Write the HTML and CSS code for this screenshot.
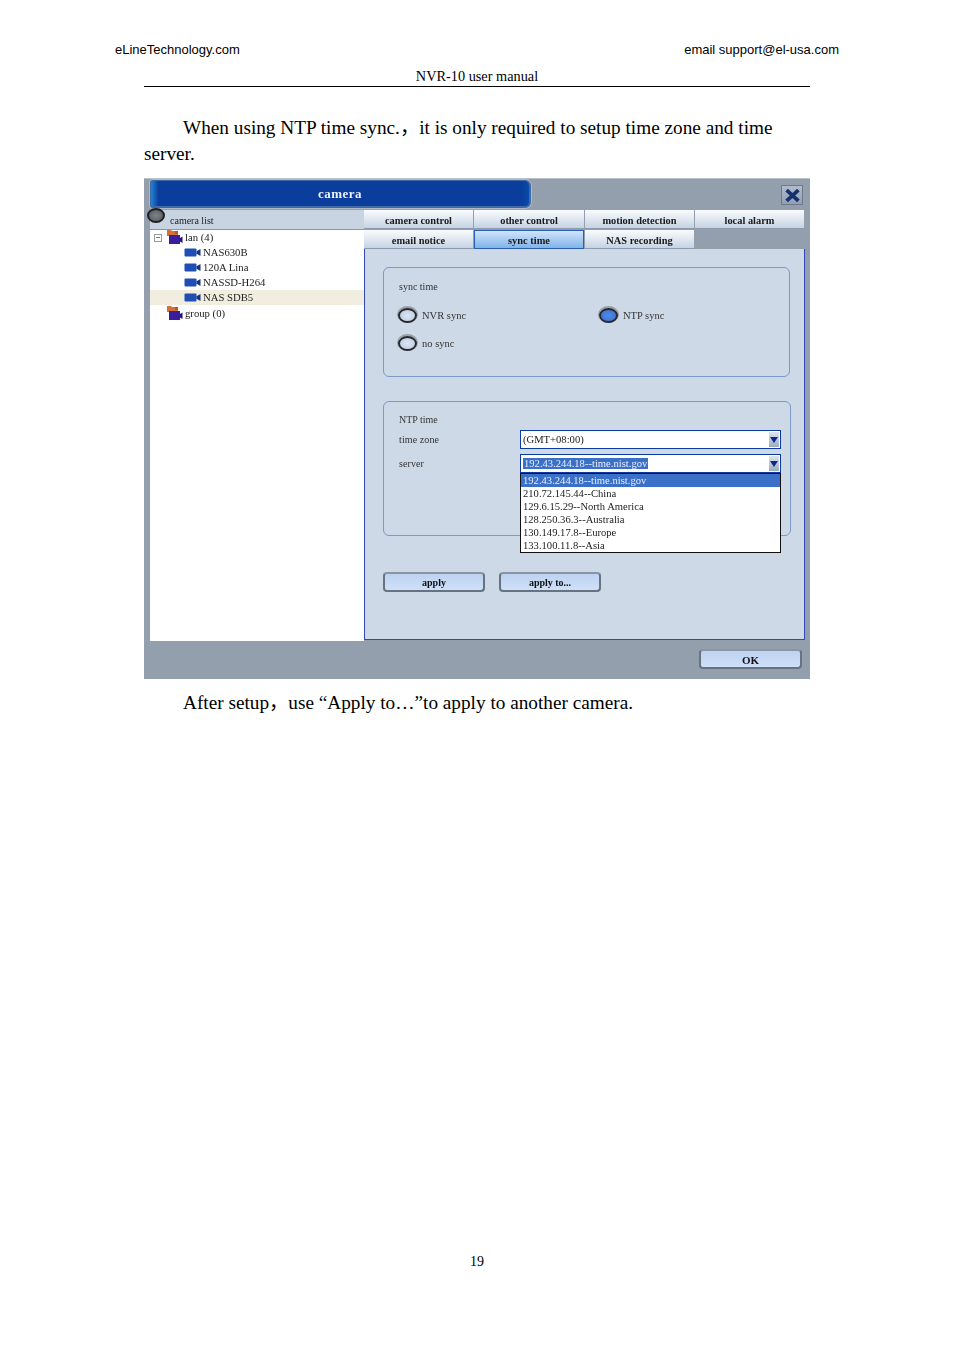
FILE: index.html
```html
<!DOCTYPE html>
<html lang="en">
<head>
<meta charset="utf-8">
<title>NVR-10 user manual</title>
<link rel="stylesheet" href="styles.css">
</head>
<body>
<svg class="defs" width="0" height="0" aria-hidden="true">
  <defs>
    <symbol id="cam" viewBox="0 0 17 9">
      <rect x="0.5" y="0.5" width="12" height="8" rx="1" fill="#1f4fb4"/>
      <path d="M12.5 3.2 16.5 1v7l-4-2.2z" fill="#14347f"/>
    </symbol>
    <symbol id="folder" viewBox="0 0 16 15">
      <path d="M0 0h4l1 1h6v5H0z" fill="#d4703a"/>
      <rect x="2" y="5" width="11" height="9" fill="#3a1d9c"/>
      <path d="M13 8l2.500-1.500V13L13 11.500z" fill="#20127a"/>
      <rect x="8" y="1" width="3" height="3" fill="#c0502a"/>
    </symbol>
  </defs>
</svg>
<div class="page">
  <header class="top">
    <span>eLineTechnology.com</span>
    <span>email support@el-usa.com</span>
  </header>
  <div class="doc">
    <div class="title">NVR-10 user manual</div>
    <p class="para first">When using NTP time sync.，it is only required to setup time zone and time<br>server.</p>

    <section class="win">
      <div class="titlebar">
        <div class="caption">camera</div>
        <div class="close"><svg viewBox="0 0 14 12" width="15" height="13"><path d="M1.500 1 12.500 11M12.500 1 1.500 11" stroke="#14306e" stroke-width="3.500" fill="none"/></svg></div>
      </div>
      <span class="knob"></span>
      <div class="main">
        <aside class="side">
          <div class="side-head">camera list</div>
          <ul class="tree">
            <li class="node root"><span class="minus"></span><svg class="fold"><use href="#folder"/></svg>lan (4)</li>
            <li class="node leaf"><svg class="cam"><use href="#cam"/></svg>NAS630B</li>
            <li class="node leaf"><svg class="cam"><use href="#cam"/></svg>120A Lina</li>
            <li class="node leaf"><svg class="cam"><use href="#cam"/></svg>NASSD-H264</li>
            <li class="node leaf sel"><svg class="cam"><use href="#cam"/></svg>NAS SDB5</li>
            <li class="node root group"><span class="minus none"></span><svg class="fold"><use href="#folder"/></svg>group (0)</li>
          </ul>
        </aside>
        <div class="content">
          <nav class="tabs">
            <span class="tab">camera control</span>
            <span class="tab">other control</span>
            <span class="tab">motion detection</span>
            <span class="tab">local alarm</span>
            <span class="tab">email notice</span>
            <span class="tab on">sync time</span>
            <span class="tab">NAS recording</span>
          </nav>
          <div class="panel">
            <fieldset class="box box-sync">
              <div class="box-title">sync time</div>
              <div class="radios">
                <label class="radio"><i class="dot"></i>NVR sync</label>
                <label class="radio"><i class="dot on"></i>NTP sync</label>
                <label class="radio"><i class="dot"></i>no sync</label>
              </div>
            </fieldset>
            <fieldset class="box box-ntp">
              <div class="box-title">NTP time</div>
              <div class="row">
                <span class="lab">time zone</span>
                <div class="combo"><span class="val">(GMT+08:00)</span><b class="arrow"></b></div>
              </div>
              <div class="row row2">
                <span class="lab">server</span>
                <div class="combo open">
                  <span class="val"><em>192.43.244.18--time.nist.gov</em></span><b class="arrow"></b>
                  <ul class="list">
                    <li class="hi">192.43.244.18--time.nist.gov</li>
                    <li>210.72.145.44--China</li>
                    <li>129.6.15.29--North America</li>
                    <li>128.250.36.3--Australia</li>
                    <li>130.149.17.8--Europe</li>
                    <li>133.100.11.8--Asia</li>
                  </ul>
                </div>
              </div>
            </fieldset>
            <div class="actions">
              <button class="btn" type="button">apply</button>
              <button class="btn" type="button">apply to...</button>
            </div>
          </div>
        </div>
      </div>
      <div class="foot"><button class="btn ok" type="button">OK</button></div>
    </section>

    <p class="para after">After setup，use “Apply to…”to apply to another camera.</p>
  </div>
  <footer class="num">19</footer>
</div>
</body>
</html>
```
FILE: styles.css
```css
* { box-sizing: border-box; }
html, body { margin: 0; background: #fff; }
.defs { position: absolute; }
.page { width: 954px; height: 1350px; display: flex; flex-direction: column; color: #000; font-family: "Liberation Serif", "Noto Sans CJK SC", serif; }
.top { display: flex; justify-content: space-between; padding: 42px 115px 0 115px; font: 13px/16px "Liberation Sans", sans-serif; }
.doc { padding: 0 144px; flex: 1; }
.title { margin-top: 10px; height: 19px; border-bottom: 1px solid #000; text-align: center; font-size: 14.300px; line-height: 16px; }
.para { margin: 0; font-size: 19.260px; line-height: 26px; }
.first { margin-top: 28px; text-indent: 39px; }
.after { margin-top: 11px; text-indent: 39px; }
.num { height: 97px; text-align: center; font-size: 14px; line-height: 17px; }

.win { position: relative; margin-top: 11px; width: 666px; height: 501px; background: #949fae; border-top: 1px solid #b8c0ca; display: flex; flex-direction: column; font-size: 10px; color: #222; filter: blur(.45px); }
.titlebar { height: 31px; padding: 1px 7px 0 6px; display: flex; justify-content: space-between; align-items: flex-start; flex: none; }
.caption { width: 381px; height: 28px; border-radius: 3px 6px 6px 3px; background: linear-gradient(90deg, #1f86d4, #0a3d9c 2%, #0a3d9c 98%, #0a4aa8); border: 1px solid #3f6aa8; border-width: 1px 2px 2px 1px; box-shadow: 0 0 0 1px #aeb8c6; color: #eef3ff; font-weight: bold; font-size: 13px; letter-spacing: .5px; line-height: 26px; text-align: center; }
.close { width: 22px; height: 20px; margin-top: 5px; background: linear-gradient(#b0bccb, #939fb1); border: 1px solid #6e7a8c; display: flex; align-items: center; justify-content: center; }
.knob { position: absolute; left: 3px; top: 29px; width: 18px; height: 15px; border-radius: 50%; background: radial-gradient(#7d8288, #55595f); border: 2px solid #1d1f22; }
.main { height: 431px; padding: 0 5px 0 6px; display: flex; flex: none; }
.side { width: 214px; display: flex; flex-direction: column; background: #fff; }
.side-head { height: 20px; background: #c9d4e2; border-bottom: 1px solid #8d98a6; padding-left: 20px; line-height: 21px; font-size: 10px; }
.tree { list-style: none; margin: 0; padding: 0; font-size: 10.700px; }
.node { height: 15px; line-height: 15px; display: flex; align-items: center; white-space: nowrap; }
.root { padding-left: 4px; }
.group { height: 16px; }
.leaf { padding-left: 34px; }
.sel { background: #f1eee0; }
.minus { width: 8px; height: 8px; border: 1px solid #9a9a9a; margin-right: 5px; position: relative; }
.minus::after { content: ""; position: absolute; left: 1px; right: 1px; top: 2px; height: 1px; background: #777; }
.minus.none { visibility: hidden; }
.fold { width: 16px; height: 15px; margin-right: 2px; }
.cam { width: 17px; height: 9px; margin-right: 2px; }
.content { width: 441px; display: flex; flex-direction: column; }
.tabs { display: grid; grid-template-columns: 110px 111px 110px 110px; grid-auto-rows: 20px; height: 40px; }
.tab { margin-right: 1px; height: 19px; background: linear-gradient(#fafcfe, #c6d3e3); border-bottom: 1px solid #8d9bb0; text-align: center; font-weight: bold; font-size: 10.400px; line-height: 21px; color: #1a1a1a; }
.tab.on { background: linear-gradient(#d0e4fa, #7fb4ea); border: 1px solid #2d5fb0; line-height: 19px; }
.panel { height: 391px; margin-top: -1px; background: #cdd9e7; border: 1px solid #3547b4; border-top: 0; padding: 18px 14px 0 18px; }
.box { margin: 0; padding: 0 9px 0 15px; border: 1px solid #7d99c8; border-radius: 6px; }
.box-sync { height: 110px; }
.box-ntp { height: 135px; margin-top: 24px; }
.box-title { font-size: 10px; line-height: 14px; padding-top: 12px; height: 26px; color: #333; }
.box-ntp .box-title { padding-top: 11px; height: 28px; }
.radios { display: grid; grid-template-columns: 201px 1fr; grid-auto-rows: 28px; margin: 11px 0 0 -1px; }
.radio { display: flex; align-items: center; gap: 5px; font-size: 10.500px; color: #333; height: 20px; }
.dot { width: 19px; height: 15px; border-radius: 50%; border: 2px solid #26282c; box-shadow: 0 -1px 0 1px #9aa0a8; background: radial-gradient(#dbe6f5, #b9c8dc); }
.dot.on { background: radial-gradient(#4f8ae8, #3a6fd0); }
.row { display: flex; height: 19px; align-items: center; }
.row2 { margin-top: 5px; }
.lab { width: 121px; font-size: 10px; color: #333; letter-spacing: .1px; }
.combo { position: relative; width: 261px; height: 19px; background: #fff; border: 1px solid #0b3aa0; display: flex; align-items: center; justify-content: space-between; padding: 0 1px 0 2px; font-size: 10.600px; }
.val em { font-style: normal; background: #3a70c8; color: #e8eefc; padding: 0 1px; }
.arrow { width: 10px; height: 15px; background: linear-gradient(#dfe5ee, #9cabc0); position: relative; }
.arrow::after { content: ""; position: absolute; left: 1px; top: 5px; border: 4px solid transparent; border-top: 6px solid #0b2a88; border-bottom: 0; }
.list { position: absolute; z-index: 2; left: -1px; top: 18px; width: 261px; height: 80px; margin: 0; padding: 0; list-style: none; background: #fff; border: 1px solid #111; font-size: 10.600px; line-height: 13px; color: #222; }
.list li { height: 13px; padding-left: 2px; white-space: nowrap; }
.list .hi { background: #3a70c8; color: #e8eefc; }
.actions { display: flex; gap: 14px; margin-top: 36px; }
.btn { width: 102px; height: 20px; padding: 2px 0 0; border: 2px solid #687280; border-top-color: #8a94a2; border-radius: 4px; background: linear-gradient(#bdd3f2, #cfe0f8); font: bold 10px/14px "Liberation Serif", serif; color: #111; }
.foot { flex: 1; padding: 8px 8px 0 0; display: flex; justify-content: flex-end; align-items: flex-start; }
.ok { width: 103px; font-size: 11px; }
```
